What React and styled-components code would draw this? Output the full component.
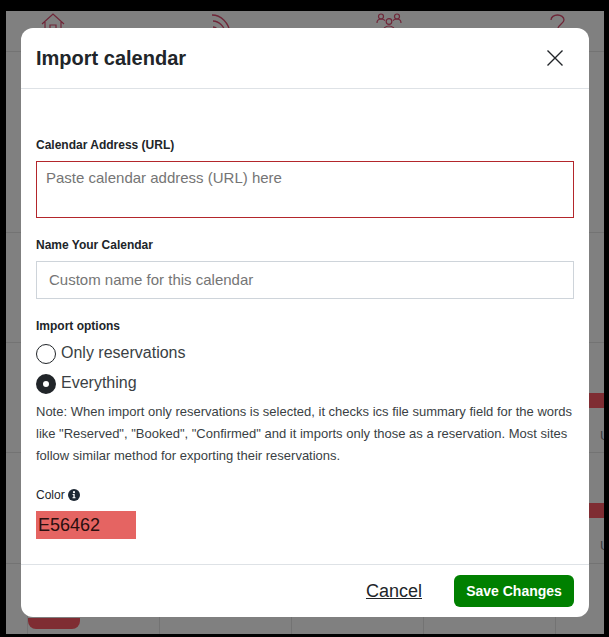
import React from "react";
import styled, { createGlobalStyle } from "styled-components";

const GlobalStyle = createGlobalStyle`
  html, body { margin: 0; padding: 0; background: #000; }
  body { font-family: "Liberation Sans", Arial, sans-serif; }
  * { box-sizing: border-box; }
`;

const Frame = styled.div`
  width: 609px;
  height: 637px;
  padding: 11px 5px 3px 6px;
  background: #000;
`;

const Page = styled.div`
  position: relative;
  height: 100%;
  background: #808080;
  overflow: hidden;
`;

const Nav = styled.nav`
  height: 41px;
  padding: 2px 34px 0;
  display: flex;
  justify-content: space-between;
  border-bottom: 1px solid #737373;
  color: #6f2638;
`;

const Rows = styled.div`
  display: flex;
  flex-direction: column;
`;

const Row = styled.div`
  height: ${(p) => p.$h}px;
  border-bottom: 1px solid #737373;
  display: flex;
  justify-content: flex-end;
`;

const DayCell = styled.div`
  width: 15px;
  padding-top: 50px;
`;

const Booking = styled.div`
  height: 15px;
  background: #7f2d33;
`;

const DayText = styled.div`
  margin: 20px 0 0 11px;
  font-size: 13px;
  line-height: 15px;
  color: #3c3f42;
`;

const WeekRow = styled.div`
  height: 71px;
  padding-left: 21px;
  display: grid;
  grid-template-columns: repeat(5, 132px);
`;

const WeekCell = styled.div`
  border-left: 1px solid #737373;
  padding-top: 54px;
`;

const Pill = styled.div`
  width: 52px;
  height: 11px;
  background: #7f2d33;
  border-radius: 0 0 8px 8px;
`;

const Overlay = styled.div`
  position: absolute;
  left: 15px;
  top: 17px;
  width: 568px;
  height: 589px;
  background: #fff;
  border-radius: 12px;
  display: flex;
  flex-direction: column;
  color: #212529;
`;

const Header = styled.header`
  height: 61px;
  padding: 0 19px 0 15px;
  display: flex;
  align-items: center;
  justify-content: space-between;
  border-bottom: 1px solid #dee2e6;
`;

const Title = styled.h2`
  margin: 0;
  font-size: 20px;
  font-weight: 700;
  color: #212529;
`;

const CloseButton = styled.button`
  width: 30px;
  height: 30px;
  padding: 0;
  border: 0;
  background: none;
  color: #212529;
  display: flex;
  align-items: center;
  justify-content: center;
`;

const Body = styled.div`
  flex: 1;
  padding: 49px 15px 0;
`;

const Label = styled.label`
  display: block;
  font-size: 12px;
  line-height: 14px;
  font-weight: 700;
  color: #212529;
`;

const UrlInput = styled.textarea`
  display: block;
  width: 100%;
  height: 57px;
  margin: 9px 0 20px;
  padding: 6px 9px;
  border: 1px solid #b3262b;
  border-radius: 0;
  outline: none;
  resize: none;
  font: 15px/19px "Liberation Sans", Arial, sans-serif;
  color: #212529;
  &::placeholder { color: #757575; opacity: 1; }
`;

const NameInput = styled.input`
  display: block;
  width: 100%;
  height: 38px;
  margin: 9px 0 20px;
  padding: 0 12px 2px;
  border: 1px solid #ced4da;
  border-radius: 0;
  outline: none;
  font: 15px "Liberation Sans", Arial, sans-serif;
  &::placeholder { color: #757575; opacity: 1; }
`;

const Options = styled.div`
  margin-top: 10px;
  display: flex;
  flex-direction: column;
  gap: 10px;
`;

const Option = styled.div`
  height: 20px;
  display: flex;
  align-items: center;
  gap: 5px;
  font-size: 16px;
  color: #3a3f44;
`;

const Radio = styled.span`
  width: 20px;
  height: 20px;
  margin-top: 1px;
  border-radius: 50%;
  border: ${(p) => (p.$checked ? "7px solid #212529" : "1px solid #212529")};
  background: #fff;
`;

const Note = styled.p`
  margin: 8px 0 0;
  font-size: 13px;
  line-height: 22px;
  color: #3a3f44;
`;

const ColorLabel = styled.div`
  margin-top: 21px;
  display: flex;
  align-items: center;
  gap: 3px;
  height: 14px;
  font-size: 12px;
  color: #212529;
`;

const ColorInput = styled.div`
  width: 100px;
  height: 28px;
  margin-top: 9px;
  padding-left: 2px;
  background: #e56462;
  color: #2a0f0f;
  font-size: 18px;
  line-height: 28px;
`;

const Footer = styled.footer`
  height: 53px;
  padding: 0 15px;
  display: flex;
  align-items: center;
  justify-content: flex-end;
  gap: 32px;
  border-top: 1px solid #dee2e6;
`;

const CancelLink = styled.a`
  font-size: 18px;
  color: #212529;
  text-decoration: underline;
`;

const SaveButton = styled.button`
  width: 120px;
  height: 32px;
  border: 0;
  border-radius: 6px;
  background: #008000;
  color: #fff;
  font: 700 14px "Liberation Sans", Arial, sans-serif;
`;

const HomeIcon = () => (
  <svg width="26" height="26" viewBox="0 0 26 26" fill="none" stroke="currentColor" strokeWidth="1.2">
    <path d="M2 11 13 1l11 10M5 9v15h16V9M10 24V12h6v12" />
  </svg>
);
const RssIcon = () => (
  <svg width="26" height="26" viewBox="0 0 26 26" fill="none" stroke="currentColor" strokeWidth="1.3">
    <path d="M4 2c9 0 17 8 18 18M5 8c6 0 12 6 12 12M5 14c3 0 6 3 7 6" />
  </svg>
);
const PeopleIcon = () => (
  <svg width="26" height="26" viewBox="0 0 26 26" fill="none" stroke="currentColor" strokeWidth="1.2">
    <circle cx="5" cy="3.500" r="2.500" />
    <circle cx="21" cy="3.500" r="2.500" />
    <circle cx="13" cy="8.500" r="2.800" />
    <path d="M1 10c0-3 2-4 4-4s3 .5 4 1.500M25 10c0-3-2-4-4-4s-3 .5-4 1.500M7 18c0-3 3-5 6-5s6 2 6 5" />
  </svg>
);
const HelpIcon = () => (
  <svg width="26" height="26" viewBox="0 0 26 26" fill="none" stroke="currentColor" strokeWidth="1.3">
    <path d="M7 7c0-3 3-5 6.500-5s6.500 2 6.500 5-6 5-6.500 9v3" />
  </svg>
);

const InfoIcon = () => (
  <svg width="12" height="12" viewBox="0 0 12 12">
    <circle cx="6" cy="6" r="6" fill="#1c2733" />
    <circle cx="6" cy="3.200" r="1.100" fill="#fff" />
    <path d="M4.600 5h2.100v3.300h.8v.9H4.500v-.9h.9V5.900h-.8z" fill="#fff" />
  </svg>
);

const App = () => {
  return (
    <>
      <GlobalStyle />
      <Frame>
        <Page>
          <Nav>
            <HomeIcon />
            <RssIcon />
            <PeopleIcon />
            <HelpIcon />
          </Nav>
          <Rows>
            <Row $h={181} />
            <Row $h={110} />
            <Row $h={110}>
              <DayCell>
                <Booking />
                <DayText>U</DayText>
              </DayCell>
            </Row>
            <Row $h={111}>
              <DayCell>
                <Booking />
                <DayText>U</DayText>
              </DayCell>
            </Row>
            <WeekRow>
              <WeekCell><Pill /></WeekCell>
              <WeekCell />
              <WeekCell />
              <WeekCell />
              <WeekCell />
            </WeekRow>
          </Rows>
          <Overlay>
            <Header>
              <Title>Import calendar</Title>
              <CloseButton aria-label="Close">
                <svg width="18" height="18" viewBox="0 0 18 18" fill="none" stroke="currentColor" strokeWidth="1.4">
                  <path d="M1.500 1.500l15 15M16.500 1.500l-15 15" />
                </svg>
              </CloseButton>
            </Header>
            <Body>
              <Label>Calendar Address (URL)</Label>
              <UrlInput placeholder="Paste calendar address (URL) here" />
              <Label>Name Your Calendar</Label>
              <NameInput placeholder="Custom name for this calendar" />
              <Label>Import options</Label>
              <Options>
                <Option><Radio />Only reservations</Option>
                <Option><Radio $checked />Everything</Option>
              </Options>
              <Note>
                Note: When import only reservations is selected, it checks ics file summary field for the words
                like "Reserved", "Booked", "Confirmed" and it imports only those as a reservation. Most sites
                follow similar method for exporting their reservations.
              </Note>
              <ColorLabel>Color<InfoIcon /></ColorLabel>
              <ColorInput>E56462</ColorInput>
            </Body>
            <Footer>
              <CancelLink>Cancel</CancelLink>
              <SaveButton>Save Changes</SaveButton>
            </Footer>
          </Overlay>
        </Page>
      </Frame>
    </>
  );
};

export default App;
